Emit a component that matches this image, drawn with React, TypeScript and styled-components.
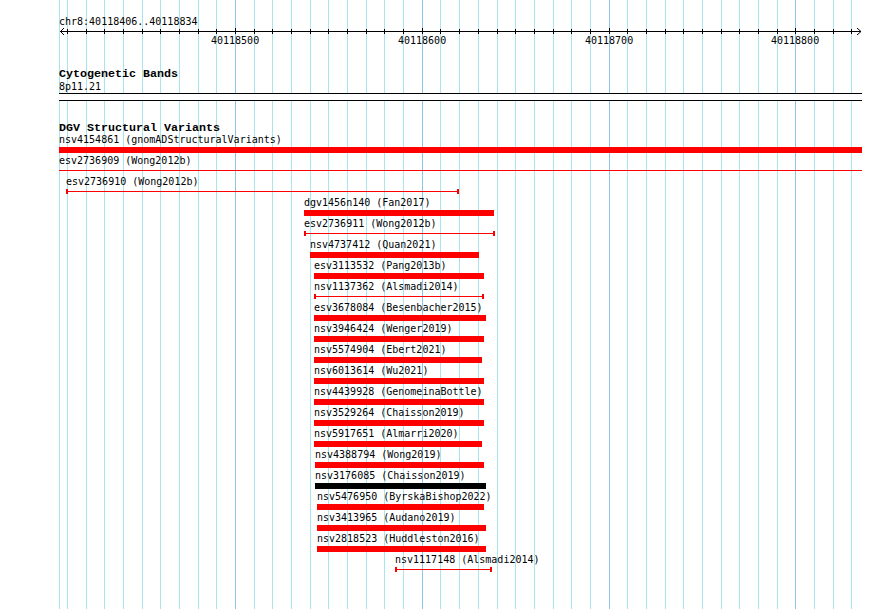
import React from 'react';
import styled, { createGlobalStyle } from 'styled-components';

// track canvas: x = 59 .. 862 on the page, 10 bp = 18.68 px
const ORIGIN = 59;
const TRACK_WIDTH = 803;
const BP_500 = 235; // page x of 40118500
const PX_PER_10BP = 18.68;

const GRID_COLOR = '#a9e5ef';
const MAJOR_COLOR = '#88c6ea';

type GlyphKind = 'bar' | 'line';

interface Feature {
  name: string;
  study: string;
  from: number;
  to: number;
  glyph: GlyphKind;
  color?: string;
  capped?: boolean;
}

const FEATURES: Feature[] = [
  { name: 'nsv4154861', study: 'gnomADStructuralVariants', from: 59, to: 862, glyph: 'bar' },
  { name: 'esv2736909', study: 'Wong2012b', from: 59, to: 862, glyph: 'line', capped: false },
  { name: 'esv2736910', study: 'Wong2012b', from: 66, to: 459, glyph: 'line' },
  { name: 'dgv1456n140', study: 'Fan2017', from: 304, to: 494, glyph: 'bar' },
  { name: 'esv2736911', study: 'Wong2012b', from: 304, to: 495, glyph: 'line' },
  { name: 'nsv4737412', study: 'Quan2021', from: 310, to: 479, glyph: 'bar' },
  { name: 'esv3113532', study: 'Pang2013b', from: 314, to: 484, glyph: 'bar' },
  { name: 'nsv1137362', study: 'Alsmadi2014', from: 314, to: 484, glyph: 'line' },
  { name: 'esv3678084', study: 'Besenbacher2015', from: 314, to: 486, glyph: 'bar' },
  { name: 'nsv3946424', study: 'Wenger2019', from: 314, to: 484, glyph: 'bar' },
  { name: 'nsv5574904', study: 'Ebert2021', from: 314, to: 482, glyph: 'bar' },
  { name: 'nsv6013614', study: 'Wu2021', from: 314, to: 484, glyph: 'bar' },
  { name: 'nsv4439928', study: 'GenomeinaBottle', from: 314, to: 484, glyph: 'bar' },
  { name: 'nsv3529264', study: 'Chaisson2019', from: 314, to: 484, glyph: 'bar' },
  { name: 'nsv5917651', study: 'Almarri2020', from: 314, to: 482, glyph: 'bar' },
  { name: 'nsv4388794', study: 'Wong2019', from: 315, to: 484, glyph: 'bar' },
  { name: 'nsv3176085', study: 'Chaisson2019', from: 315, to: 486, glyph: 'bar', color: '#000' },
  { name: 'nsv5476950', study: 'ByrskaBishop2022', from: 317, to: 484, glyph: 'bar' },
  { name: 'nsv3413965', study: 'Audano2019', from: 317, to: 486, glyph: 'bar' },
  { name: 'nsv2818523', study: 'Huddleston2016', from: 317, to: 486, glyph: 'bar' },
  { name: 'nsv1117148', study: 'Alsmadi2014', from: 395, to: 492, glyph: 'line' },
];

const gridLines = () => {
  const lines: { x: number; major: boolean; bp: number }[] = [];
  for (let k = -9; k <= 33; k++) {
    lines.push({
      x: Math.round(BP_500 + k * PX_PER_10BP),
      major: k % 10 === 0,
      bp: 40118500 + k * 10,
    });
  }
  return lines;
};

const GlobalStyle = createGlobalStyle`
  html, body {
    margin: 0;
    padding: 0;
    background: #fff;
  }
  body {
    font-family: "DejaVu Sans Mono", "Liberation Mono", monospace;
    font-size: 10px;
    color: #000;
  }
`;

const Page = styled.div`
  position: relative;
  width: 890px;
  height: 609px;
  overflow: hidden;
  background: #fff;
`;

const GridLayer = styled.svg`
  position: absolute;
  left: 0;
  top: 0;
  z-index: 0;
  pointer-events: none;
`;

const Panel = styled.div`
  position: relative;
  z-index: 1;
  width: ${TRACK_WIDTH}px;
  padding: 16px 0 0 ${ORIGIN}px;
`;

const Landmark = styled.div`
  height: 12px;
  line-height: 12px;
  white-space: nowrap;
`;

const Ruler = styled.div`
  position: relative;
  height: 20px;
`;

const AxisDrawing = styled.svg`
  display: block;
`;

const TickLabel = styled.span`
  position: absolute;
  top: 7px;
  width: 48px;
  line-height: 12px;
  text-align: center;
`;

const Track = styled.section<{ $gap: number }>`
  margin-top: ${(p) => p.$gap}px;
`;

const TrackTitle = styled.h3`
  margin: 0;
  height: 12px;
  font-family: "Liberation Mono", "DejaVu Sans Mono", monospace;
  font-size: 11.67px;
  line-height: 12px;
  font-weight: bold;
  white-space: nowrap;
`;

const BandName = styled.div`
  margin-top: 1px;
  height: 12px;
  line-height: 12px;
`;

const Band = styled.div`
  height: 6px;
  border-top: 1px solid #000;
  border-bottom: 1px solid #000;
  background: #fff;
`;

const FeatureRow = styled.div`
  height: 21px;
`;

const FeatureLabel = styled.div`
  height: 13px;
  line-height: 12px;
  white-space: nowrap;
`;

const Glyph = styled.div<{ $kind: GlyphKind; $color: string; $capped: boolean }>`
  position: relative;
  box-sizing: border-box;
  height: ${(p) => (p.$kind === 'bar' ? 6 : 5)}px;
  background: ${(p) => (p.$kind === 'bar' ? p.$color : 'transparent')};
  border-left: ${(p) => (p.$kind === 'line' && p.$capped ? `2px solid ${p.$color}` : 'none')};
  border-right: ${(p) => (p.$kind === 'line' && p.$capped ? `2px solid ${p.$color}` : 'none')};

  &::after {
    content: '';
    display: ${(p) => (p.$kind === 'line' ? 'block' : 'none')};
    position: absolute;
    left: 0;
    right: 0;
    top: 2px;
    height: 1px;
    background: ${(p) => p.$color};
  }
`;

const Axis = () => {
  const lines = gridLines();
  const y = 3.5;
  const end = TRACK_WIDTH - 1;
  return (
    <Ruler>
      <AxisDrawing width={TRACK_WIDTH} height={8}>
        <line x1={1} y1={y} x2={end} y2={y} stroke="#000" strokeWidth={1} />
        <polyline points={`5,0 1.5,${y} 5,7`} fill="none" stroke="#000" strokeWidth={1} />
        <polyline points={`${end - 4},0 ${end},${y} ${end - 4},7`} fill="none" stroke="#000" strokeWidth={1} />
        {lines.map((l) => (
          <rect
            key={l.bp}
            x={l.x - ORIGIN}
            y={l.major ? 0 : 1}
            width={1}
            height={l.major ? 6 : 5}
            fill="#000"
          />
        ))}
      </AxisDrawing>
      {lines
        .filter((l) => l.major)
        .map((l) => (
          <TickLabel key={l.bp} style={{ left: l.x - ORIGIN - 24 }}>
            {l.bp}
          </TickLabel>
        ))}
    </Ruler>
  );
};

const FeatureTrack = ({ f }: { f: Feature }) => {
  const left = f.from - ORIGIN;
  return (
    <FeatureRow>
      <FeatureLabel style={{ marginLeft: left }}>
        {f.name} ({f.study})
      </FeatureLabel>
      <Glyph
        $kind={f.glyph}
        $color={f.color ?? '#ff0000'}
        $capped={f.capped !== false}
        style={{ marginLeft: left, width: f.to - f.from }}
      />
    </FeatureRow>
  );
};

const App = (): JSX.Element => {
  const lines = gridLines();
  return (
    <>
      <GlobalStyle />
      <Page>
        <GridLayer width={890} height={609}>
          <rect x={ORIGIN} y={0} width={1} height={609} fill={GRID_COLOR} />
          {lines.map((l) => (
            <rect
              key={l.bp}
              x={l.x}
              y={0}
              width={1}
              height={609}
              fill={l.major ? MAJOR_COLOR : GRID_COLOR}
            />
          ))}
        </GridLayer>
        <Panel>
          <Landmark>chr8:40118406..40118834</Landmark>
          <Axis />
          <Track $gap={20}>
            <TrackTitle>Cytogenetic Bands</TrackTitle>
            <BandName>8p11.21</BandName>
            <Band />
          </Track>
          <Track $gap={21}>
            <TrackTitle>DGV Structural Variants</TrackTitle>
            {FEATURES.map((f) => (
              <FeatureTrack key={f.name} f={f} />
            ))}
          </Track>
        </Panel>
      </Page>
    </>
  );
};

export default App;
